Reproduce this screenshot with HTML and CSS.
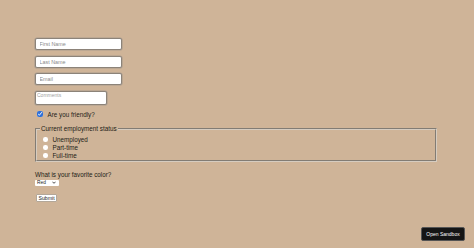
FILE: index.html
```html
<!DOCTYPE html>
<html>
<head>
<meta charset="utf-8">
<link rel="stylesheet" href="styles.css">
</head>
<body>
<form class="form">
  <input class="field" type="text" placeholder="First Name">
  <input class="field" type="text" placeholder="Last Name">
  <input class="field" type="email" placeholder="Email">
  <textarea class="comments" placeholder="Comments"></textarea>
  <label class="check-row"><input class="check" type="checkbox" checked><span>Are you friendly?</span></label>
  <fieldset class="status">
    <legend class="legend">Current employment status</legend>
    <label class="radio-row"><input class="radio" type="radio" name="emp"><span>Unemployed</span></label>
    <label class="radio-row"><input class="radio" type="radio" name="emp"><span>Part-time</span></label>
    <label class="radio-row"><input class="radio" type="radio" name="emp"><span>Full-time</span></label>
  </fieldset>
  <label class="color-label">What is your favorite color?</label>
  <div class="select"><span>Red</span><svg class="chev" viewBox="0 0 10 6" width="4" height="3"><path d="M1 1 L5 5 L9 1" fill="none" stroke="#222" stroke-width="2"/></svg></div>
  <button class="submit" type="button">Submit</button>
</form>
<button class="sandbox" type="button">Open Sandbox</button>
</body>
</html>
```
FILE: styles.css
```css
html, body {
  margin: 0;
  padding: 0;
  background: #cfb498;
  width: 474px;
  height: 248px;
  overflow: hidden;
  font-family: "Liberation Sans", Arial, sans-serif;
  color: #221c16;
}
.form {
  display: flex;
  flex-direction: column;
  align-items: flex-start;
  padding: 38px 0 0 35px;
}
.field {
  box-sizing: border-box;
  width: 87px;
  height: 12px;
  margin: 0 0 5.5px 0;
  padding: 0 0 0 3.5px;
  border: 1px solid #8c8379;
  box-shadow: 0 0 0.6px 0.6px #a99c8e;
  border-radius: 2px;
  background: #fff;
  font-family: inherit;
  font-size: 5.4px;
  outline: none;
}
.field::placeholder { color: #8a8a8a; }
.comments {
  box-sizing: border-box;
  width: 72px;
  height: 14px;
  margin: 0;
  padding: 0 0 0 1px;
  border: 1px solid #8c8379;
  box-shadow: 0 0 0.6px 0.6px #a99c8e;
  border-radius: 2px;
  background: #fff;
  font-family: inherit;
  font-size: 5px;
  line-height: 6px;
  resize: none;
}
.comments::placeholder { color: #a0a0a0; }
.check-row {
  display: flex;
  align-items: center;
  height: 8px;
  margin-top: 5.5px;
  font-size: 6.3px;
}
.check {
  width: 5.5px;
  height: 5.5px;
  margin: 0 5px 0 2px;
  accent-color: #2d6fd8;
}
.status {
  box-sizing: border-box;
  width: 402px;
  margin: 6.7px 0 0 0;
  padding: 2.6px 0 1px 3px;
  border: 2px groove #d6ccc0;
  font-size: 6.3px;
}
.legend {
  padding: 0 1px;
  font-size: 6.3px;
  line-height: 8px;
}
.radio-row {
  display: flex;
  align-items: center;
  height: 8px;
}
.radio {
  appearance: none;
  -webkit-appearance: none;
  width: 4.5px;
  height: 4.5px;
  margin: 0 5px 0 3px;
  border-radius: 50%;
  background: #fff;
  border: none;
}
.color-label {
  margin-top: 9.2px;
  font-size: 6.3px;
  line-height: 8px;
}
.select {
  box-sizing: border-box;
  width: 24px;
  height: 6px;
  margin-top: 0.5px;
  display: flex;
  align-items: center;
  justify-content: space-between;
  padding: 0 3px 0 2px;
  background: #fff;
  border-radius: 1px;
  font-size: 4.8px;
}
.chev { display: block; }
.submit {
  box-sizing: border-box;
  width: 21px;
  height: 7.5px;
  margin-top: 8.5px;
  margin-left: 1px;
  padding: 0;
  background: #fff;
  border: 0.5px solid #b3a798;
  border-radius: 1px;
  font-family: inherit;
  font-size: 5.2px;
  line-height: 7px;
  color: #221c16;
}
.sandbox {
  position: fixed;
  right: 9px;
  bottom: 7px;
  width: 44px;
  height: 14px;
  padding: 0;
  background: #151515;
  border: 0.5px solid #555;
  border-radius: 2px;
  color: #fff;
  font-family: inherit;
  font-size: 5px;
}
```
